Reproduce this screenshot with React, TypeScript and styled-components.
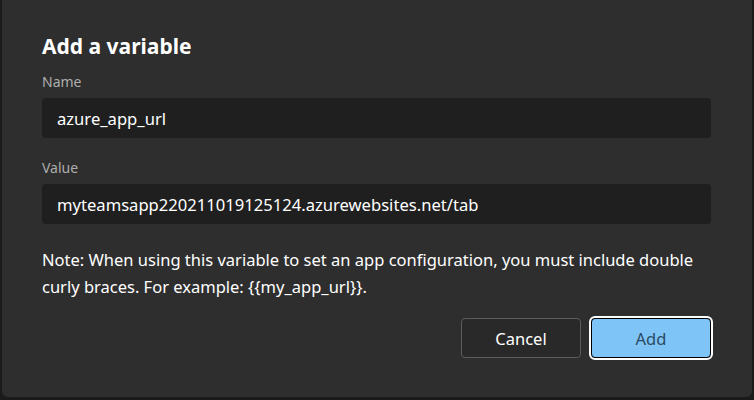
import React from "react";
import styled, { createGlobalStyle } from "styled-components";

const Global = createGlobalStyle`
  html, body { margin: 0; padding: 0; background: #1f1f1f; }
  body { font-family: "Noto Sans", "Open Sans", sans-serif; }
  * { box-sizing: border-box; }
`;

const Page = styled.div`
  width: 754px;
  height: 400px;
  padding: 0 2px 3px 2px;
  background: #1b1b1b;
  display: flex;
`;

const Dialog = styled.div`
  flex: 1;
  background: #2e2e2e;
  border-radius: 0 0 6px 6px;
  padding: 32px 41px 0 40px;
  display: flex;
  flex-direction: column;
`;

const Title = styled.h1`
  margin: 0;
  font-size: 21px;
  font-weight: 700;
  color: #ffffff;
  line-height: 28px;
`;

const Field = styled.div<{ $top: number }>`
  display: flex;
  flex-direction: column;
  margin-top: ${(p) => p.$top}px;
`;

const Label = styled.label`
  font-size: 14px;
  line-height: 20px;
  color: #adadad;
  margin-bottom: 6px;
`;

const Input = styled.div`
  height: 40px;
  background: #1f1f1f;
  border-radius: 4px;
  padding: 0 15px;
  display: flex;
  align-items: center;
  font-size: 16.6px;
  color: #ffffff;
`;

const Note = styled.p`
  margin: 22px 0 0 0;
  font-size: 16.5px;
  line-height: 27px;
  color: #ffffff;
`;

const Actions = styled.div`
  display: flex;
  justify-content: flex-end;
  gap: 10px;
  margin-top: 18px;
`;

const Button = styled.button<{ $primary?: boolean }>`
  width: 120px;
  height: 40px;
  border-radius: 4px;
  font-family: inherit;
  font-size: 16.5px;
  cursor: pointer;
  ${(p) =>
    p.$primary
      ? `
    background: #7fc4f6;
    color: #2a4a63;
    border: 1px solid #000;
    outline: 2px solid #ffffff;
    outline-offset: 0px;
  `
      : `
    background: #292929;
    color: #ffffff;
    border: 1px solid #5c5c5c;
  `}
`;

const noteText =
  "Note: When using this variable to set an app configuration, you must include double curly braces. For example: {{my_app_url}}.";

export default function App() {
  return (
    <>
      <Global />
      <Page>
        <Dialog>
          <Title>Add a variable</Title>
          <Field $top={12}>
            <Label>Name</Label>
            <Input>azure_app_url</Input>
          </Field>
          <Field $top={20}>
            <Label>Value</Label>
            <Input>myteamsapp220211019125124.azurewebsites.net/tab</Input>
          </Field>
          <Note>{noteText}</Note>
          <Actions>
            <Button>Cancel</Button>
            <Button $primary>Add</Button>
          </Actions>
        </Dialog>
      </Page>
    </>
  );
}
